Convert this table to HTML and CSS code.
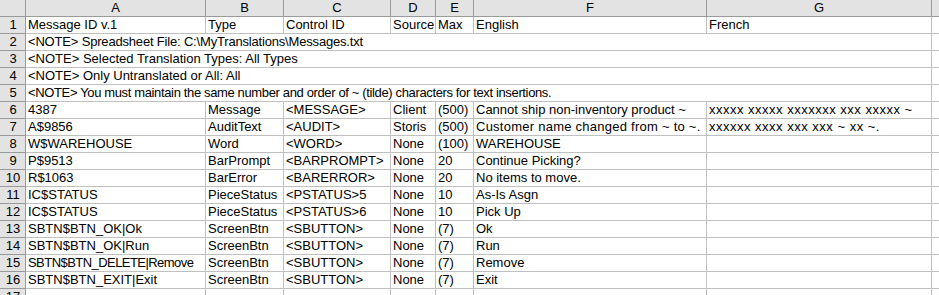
FILE: index.html
```html
<!DOCTYPE html>
<html>
<head>
<meta charset="utf-8">
<link rel="stylesheet" href="styles.css">
</head>
<body>
<div class="sheet">
  <div class="hd corner"></div>
  <div class="hd col">A</div>
  <div class="hd col">B</div>
  <div class="hd col">C</div>
  <div class="hd col">D</div>
  <div class="hd col">E</div>
  <div class="hd col">F</div>
  <div class="hd col">G</div>
  <div class="hd col last"></div>

  <div class="hd rn">1</div>
  <div class="c">Message ID v.1</div>
  <div class="c">Type</div>
  <div class="c">Control ID</div>
  <div class="c">Source</div>
  <div class="c">Max</div>
  <div class="c">English</div>
  <div class="c">French</div>
  <div class="c last"></div>

  <div class="hd rn">2</div>
  <div class="c merged snug">&lt;NOTE&gt; Spreadsheet File: C:\MyTranslations\Messages.txt</div>
  <div class="c last"></div>

  <div class="hd rn">3</div>
  <div class="c merged">&lt;NOTE&gt; Selected Translation Types: All Types</div>
  <div class="c last"></div>

  <div class="hd rn">4</div>
  <div class="c merged">&lt;NOTE&gt; Only Untranslated or All: All</div>
  <div class="c last"></div>

  <div class="hd rn">5</div>
  <div class="c merged tight">&lt;NOTE&gt; You must maintain the same number and order of ~ (tilde) characters for text insertions.</div>
  <div class="c last"></div>

  <div class="hd rn">6</div>
  <div class="c">4387</div>
  <div class="c">Message</div>
  <div class="c">&lt;MESSAGE&gt;</div>
  <div class="c">Client</div>
  <div class="c">(500)</div>
  <div class="c">Cannot ship non-inventory product ~</div>
  <div class="c fr">xxxxx xxxxx xxxxxxx xxx xxxxx ~</div>
  <div class="c last"></div>

  <div class="hd rn">7</div>
  <div class="c">A$9856</div>
  <div class="c">AuditText</div>
  <div class="c">&lt;AUDIT&gt;</div>
  <div class="c">Storis</div>
  <div class="c">(500)</div>
  <div class="c wide">Customer name changed from ~ to ~.</div>
  <div class="c fr">xxxxxx xxxx xxx xxx ~ xx ~.</div>
  <div class="c last"></div>

  <div class="hd rn">8</div>
  <div class="c">W$WAREHOUSE</div>
  <div class="c">Word</div>
  <div class="c">&lt;WORD&gt;</div>
  <div class="c">None</div>
  <div class="c">(100)</div>
  <div class="c">WAREHOUSE</div>
  <div class="c"></div>
  <div class="c last"></div>

  <div class="hd rn">9</div>
  <div class="c">P$9513</div>
  <div class="c">BarPrompt</div>
  <div class="c">&lt;BARPROMPT&gt;</div>
  <div class="c">None</div>
  <div class="c">20</div>
  <div class="c">Continue Picking?</div>
  <div class="c"></div>
  <div class="c last"></div>

  <div class="hd rn">10</div>
  <div class="c">R$1063</div>
  <div class="c">BarError</div>
  <div class="c">&lt;BARERROR&gt;</div>
  <div class="c">None</div>
  <div class="c">20</div>
  <div class="c">No items to move.</div>
  <div class="c"></div>
  <div class="c last"></div>

  <div class="hd rn">11</div>
  <div class="c">IC$STATUS</div>
  <div class="c">PieceStatus</div>
  <div class="c">&lt;PSTATUS&gt;5</div>
  <div class="c">None</div>
  <div class="c">10</div>
  <div class="c">As-Is Asgn</div>
  <div class="c"></div>
  <div class="c last"></div>

  <div class="hd rn">12</div>
  <div class="c">IC$STATUS</div>
  <div class="c">PieceStatus</div>
  <div class="c">&lt;PSTATUS&gt;6</div>
  <div class="c">None</div>
  <div class="c">10</div>
  <div class="c">Pick Up</div>
  <div class="c"></div>
  <div class="c last"></div>

  <div class="hd rn">13</div>
  <div class="c">SBTN$BTN_OK|Ok</div>
  <div class="c">ScreenBtn</div>
  <div class="c">&lt;SBUTTON&gt;</div>
  <div class="c">None</div>
  <div class="c">(7)</div>
  <div class="c">Ok</div>
  <div class="c"></div>
  <div class="c last"></div>

  <div class="hd rn">14</div>
  <div class="c">SBTN$BTN_OK|Run</div>
  <div class="c">ScreenBtn</div>
  <div class="c">&lt;SBUTTON&gt;</div>
  <div class="c">None</div>
  <div class="c">(7)</div>
  <div class="c">Run</div>
  <div class="c"></div>
  <div class="c last"></div>

  <div class="hd rn">15</div>
  <div class="c tighter">SBTN$BTN_DELETE|Remove</div>
  <div class="c">ScreenBtn</div>
  <div class="c">&lt;SBUTTON&gt;</div>
  <div class="c">None</div>
  <div class="c">(7)</div>
  <div class="c">Remove</div>
  <div class="c"></div>
  <div class="c last"></div>

  <div class="hd rn">16</div>
  <div class="c">SBTN$BTN_EXIT|Exit</div>
  <div class="c">ScreenBtn</div>
  <div class="c">&lt;SBUTTON&gt;</div>
  <div class="c">None</div>
  <div class="c">(7)</div>
  <div class="c">Exit</div>
  <div class="c"></div>
  <div class="c last"></div>

  <div class="hd rn">17</div>
  <div class="c"></div>
  <div class="c"></div>
  <div class="c"></div>
  <div class="c"></div>
  <div class="c"></div>
  <div class="c"></div>
  <div class="c"></div>
  <div class="c last"></div>
</div>
</body>
</html>
```

FILE: styles.css
```css
html, body {
  margin: 0;
  padding: 0;
  background: #ffffff;
  overflow: hidden;
}

.sheet {
  display: grid;
  grid-template-columns: 26px 180px 78px 107px 45px 38px 233px 225px 1fr;
  grid-auto-rows: 17px;
  font-family: "Liberation Sans", Arial, sans-serif;
  font-size: 13px;
  color: #000000;
  width: 939px;
}

.sheet > div {
  box-sizing: border-box;
  white-space: nowrap;
  overflow: hidden;
  line-height: 16px;
}

.hd {
  background: #e3e3e3;
  border-right: 1px solid #9a9a9a;
  border-bottom: 1px solid #9a9a9a;
  text-align: center;
}

.rn {
  text-align: center;
  padding-left: 1px;
}

.hd.last {
  border-right: none;
}

.c {
  border-right: 1px solid #c0c0c0;
  border-bottom: 1px solid #c0c0c0;
  padding-left: 2px;
}

.c.last {
  border-right: none;
}

.merged {
  grid-column: span 7;
}

.snug {
  letter-spacing: -0.18px;
}

.tight {
  letter-spacing: -0.36px;
}

.tighter {
  letter-spacing: -0.55px;
}

.wide {
  letter-spacing: 0.25px;
}

.fr {
  letter-spacing: 0.5px;
}
```
